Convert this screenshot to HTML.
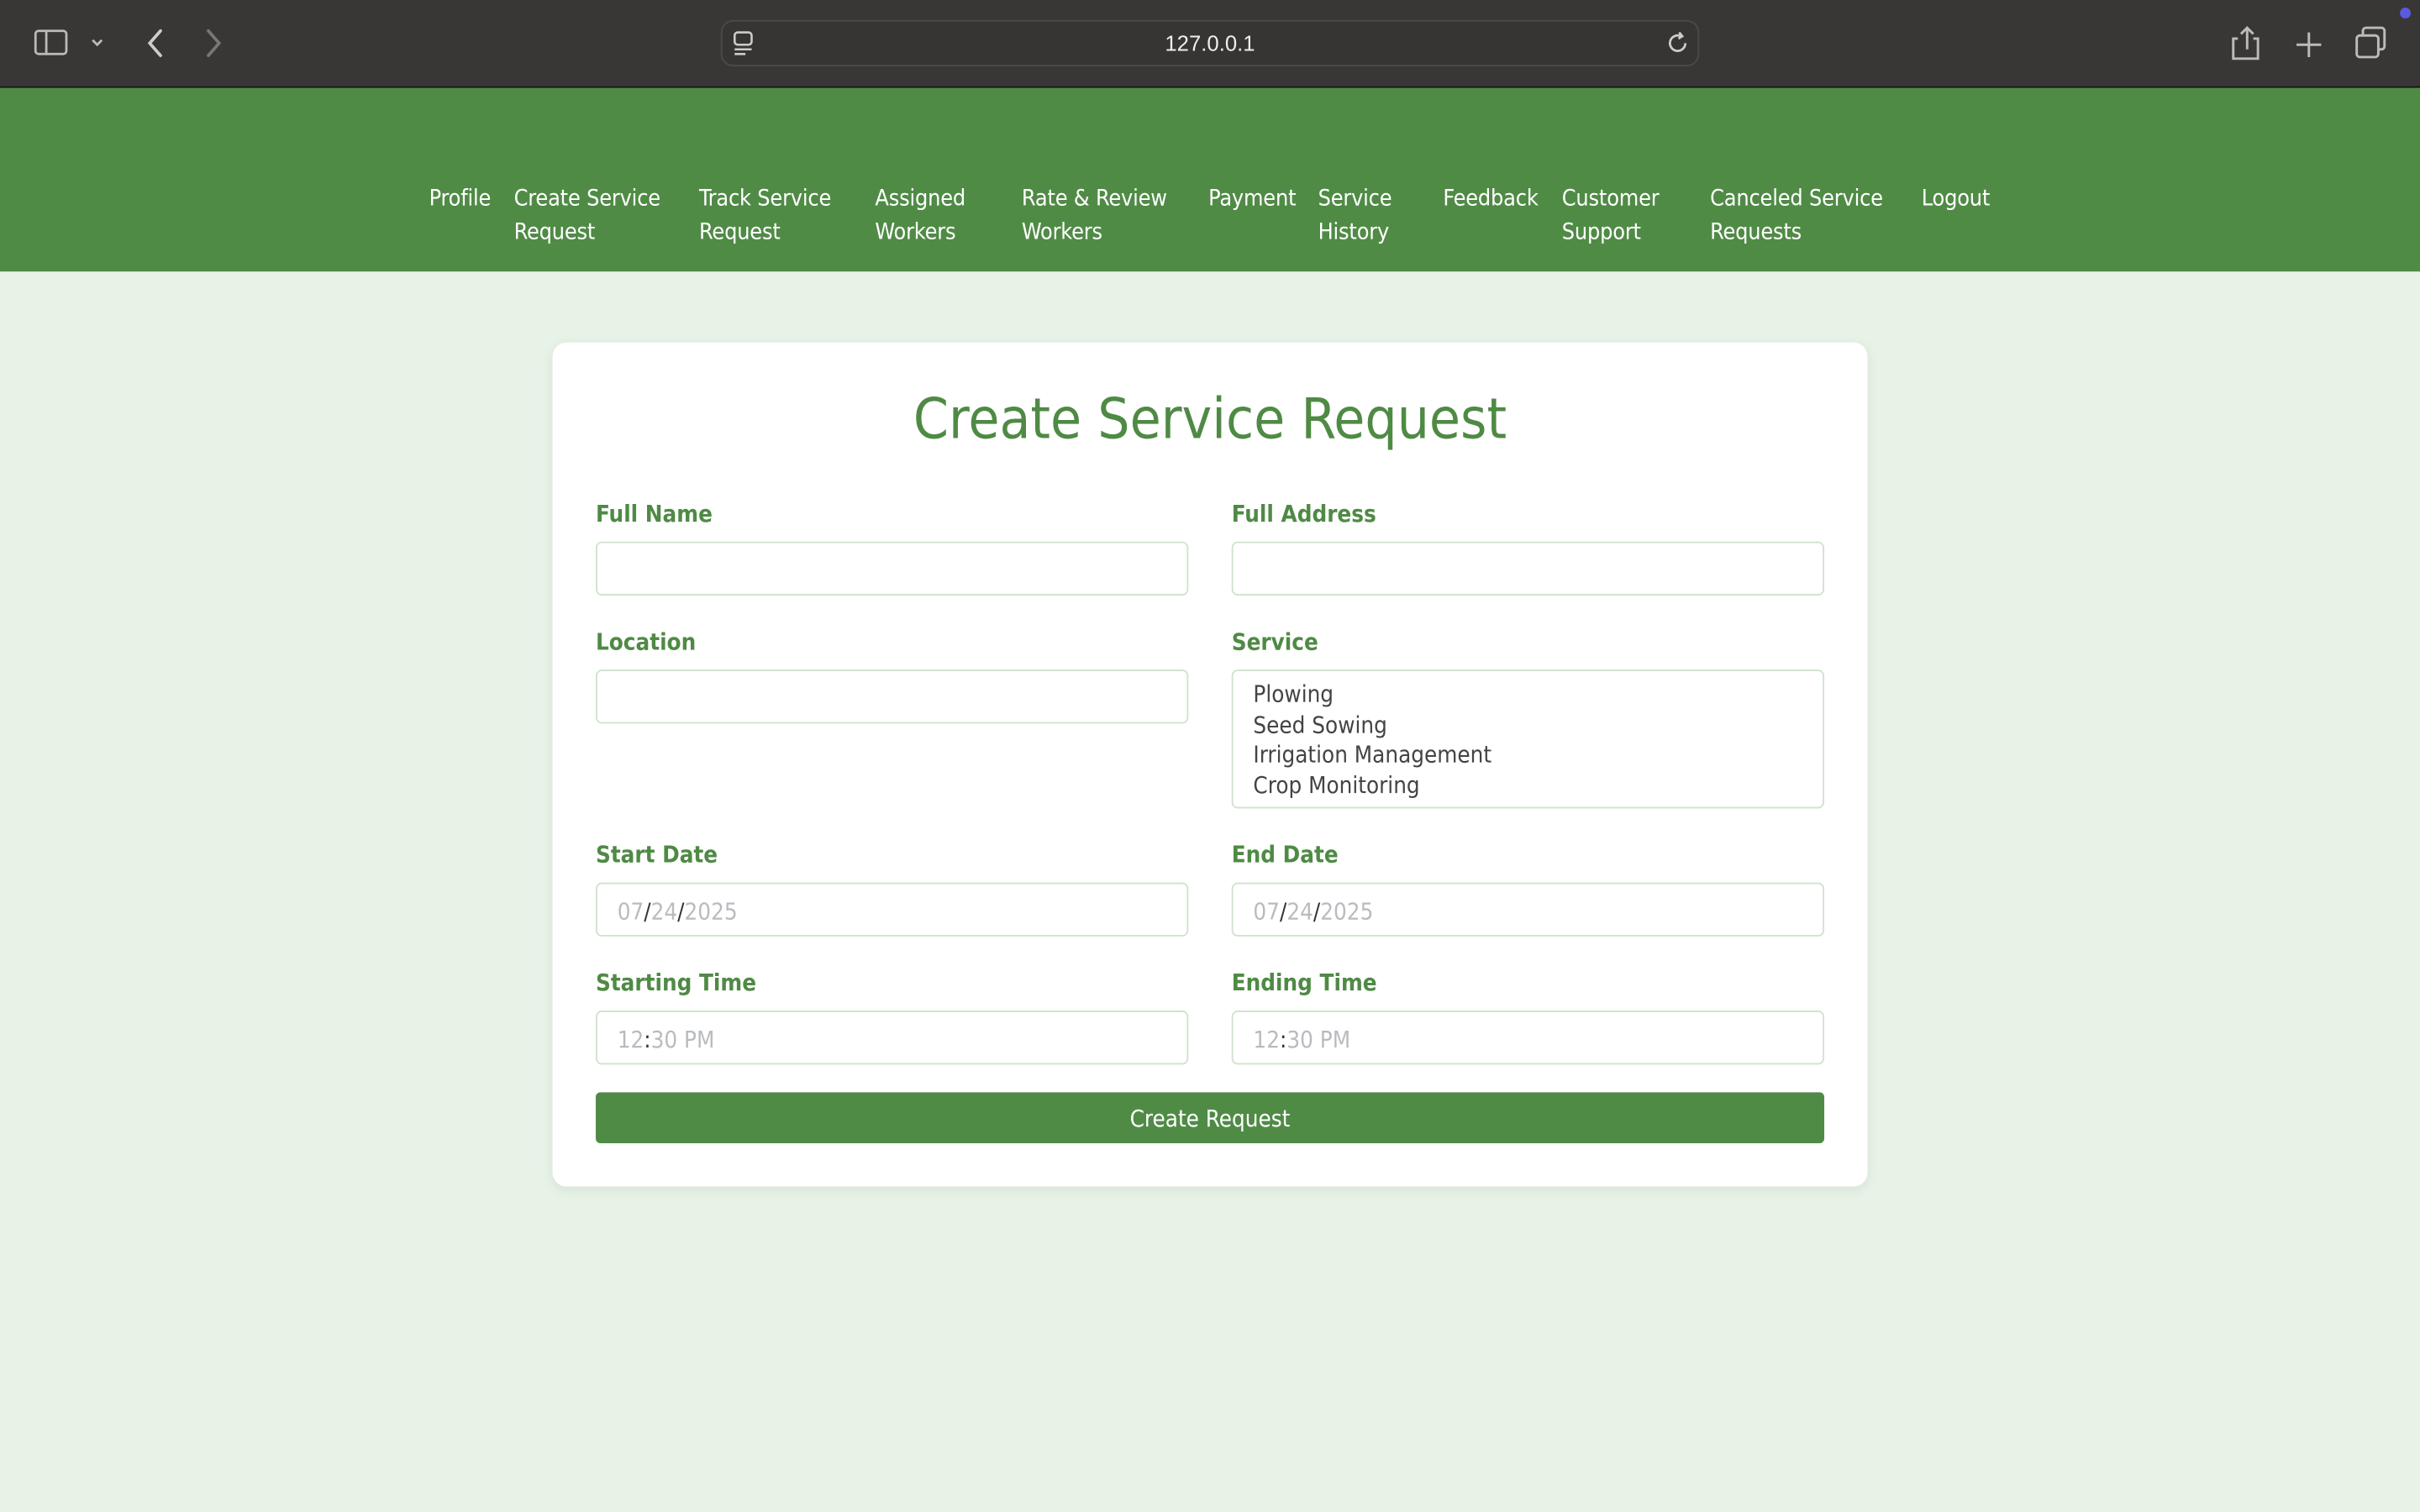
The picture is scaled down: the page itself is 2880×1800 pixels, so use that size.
<!DOCTYPE html>
<html><head><meta charset="utf-8"><style>
*{margin:0;padding:0;box-sizing:border-box}
html,body{width:2880px;height:1800px;overflow:hidden;background:#e8f3e8}
#w{position:absolute;left:0;top:0;width:1568px;height:980px;transform:scale(1.836735);transform-origin:0 0;font-family:"DejaVu Sans Condensed","DejaVu Sans","Liberation Sans",sans-serif}
.a{position:absolute}
#tb{left:0;top:0;width:1568px;height:57px;background:#383736;border-bottom:1px solid #111}
#url{left:467px;top:13px;width:634px;height:30px;border:1px solid #4a4a4a;border-radius:8px;background:#363534;color:#eee;font-size:14px;text-align:center;line-height:29px;font-family:"Liberation Sans",sans-serif}
#nav{left:0;top:57px;width:1568px;height:119px;background:#508b46}
.n{position:absolute;top:118px;color:#fff;font-size:14.6px;letter-spacing:-0.1px;line-height:22px;white-space:nowrap}
#card{left:358px;top:222px;width:852px;height:547px;background:#fff;border-radius:9px;box-shadow:0 2px 8px rgba(0,0,0,.08)}
h1{position:absolute;left:0;width:1568px;top:248px;text-align:center;font-size:36.5px;font-weight:normal;color:#4f8a45;line-height:48px}
.l{position:absolute;color:#4f8a45;font-weight:bold;font-size:15px;line-height:20px;margin-top:1px}
.i{position:absolute;width:384px;height:35px;border:1px solid #cfe3cc;border-radius:4px;background:#fff;color:#b8bcc0;font-size:15px;line-height:36px;padding-left:13px}
.i b{font-weight:normal;color:#333}
.o{color:#444;font-size:15px;line-height:19.6px}
#btn{left:386px;top:708px;width:796px;height:33px;background:#508b46;border-radius:3px;color:#fff;font-size:15px;text-align:center;line-height:34px}
</style></head><body><div id="w">
<div id="tb" class="a"></div>
<svg class="a" style="left:20px;top:17px" width="50" height="22" viewBox="0 0 50 22" fill="none" stroke="#bbb" stroke-width="1.5"><rect x="3" y="3" width="20" height="15" rx="2"/><line x1="10" y1="3" x2="10" y2="18"/><path d="M40 9l3 3 3-3"/></svg>
<svg class="a" style="left:90px;top:17px" width="60" height="22" viewBox="0 0 60 22" fill="none" stroke-width="2" stroke-linecap="round"><path d="M14 3l-7 8 7 8" stroke="#ccc"/><path d="M45 3l7 8-7 8" stroke="#777"/></svg>
<div id="url" class="a">127.0.0.1</div>
<svg class="a" style="left:474px;top:20px" width="16" height="18" viewBox="0 0 16 18" fill="none" stroke="#ccc" stroke-width="1.4"><rect x="2" y="1" width="11" height="8" rx="2"/><line x1="2" y1="12" x2="13" y2="12"/><line x1="2" y1="15" x2="9" y2="15"/></svg>
<svg class="a" style="left:1078px;top:19px" width="18" height="18" viewBox="0 0 18 18" fill="none" stroke="#ccc" stroke-width="1.5"><path d="M14 9a5 5 0 1 1-3-4.6"/><path d="M10 2l2 2.5-2.5 1.5"/></svg>
<svg class="a" style="left:1440px;top:14px" width="120" height="28" viewBox="0 0 120 28" fill="none" stroke="#bbb" stroke-width="1.6"><path d="M10 11h-3v13h16v-13h-3M16 4v14M12 8l4-4 4 4"/><path d="M56 7v16M48 15h16"/><rect x="87" y="9" width="14" height="14" rx="2"/><path d="M91 9V6a2 2 0 0 1 2-2h10a2 2 0 0 1 2 2v10a2 2 0 0 1-2 2h-2"/></svg>
<div class="a" style="left:1555px;top:5px;width:7px;height:7px;border-radius:50%;background:#5a5ae0"></div>
<div id="nav" class="a"></div>
<div class="n" style="left:278px">Profile</div>
<div class="n" style="left:333px">Create Service<br>Request</div>
<div class="n" style="left:453px">Track Service<br>Request</div>
<div class="n" style="left:567px">Assigned<br>Workers</div>
<div class="n" style="left:662px">Rate &amp; Review<br>Workers</div>
<div class="n" style="left:783px">Payment</div>
<div class="n" style="left:854px">Service<br>History</div>
<div class="n" style="left:935px">Feedback</div>
<div class="n" style="left:1012px">Customer<br>Support</div>
<div class="n" style="left:1108px">Canceled Service<br>Requests</div>
<div class="n" style="left:1245px">Logout</div>
<div id="card" class="a"></div>
<h1>Create Service Request</h1>
<div class="l" style="left:386px;top:322px">Full Name</div>
<div class="l" style="left:798px;top:322px">Full Address</div>
<div class="i" style="left:386px;top:351px"></div>
<div class="i" style="left:798px;top:351px"></div>
<div class="l" style="left:386px;top:405px">Location</div>
<div class="l" style="left:798px;top:405px">Service</div>
<div class="i" style="left:386px;top:434px"></div>
<div class="i" style="left:798px;top:434px;height:90px;padding-top:6px;line-height:19.6px">
<div class="o">Plowing</div><div class="o">Seed Sowing</div><div class="o">Irrigation Management</div><div class="o">Crop Monitoring</div></div>
<div class="l" style="left:386px;top:543px">Start Date</div>
<div class="l" style="left:798px;top:543px">End Date</div>
<div class="i" style="left:386px;top:572px">07<b>/</b>24<b>/</b>2025</div>
<div class="i" style="left:798px;top:572px">07<b>/</b>24<b>/</b>2025</div>
<div class="l" style="left:386px;top:626px">Starting Time</div>
<div class="l" style="left:798px;top:626px">Ending Time</div>
<div class="i" style="left:386px;top:655px">12<b>:</b>30 PM</div>
<div class="i" style="left:798px;top:655px">12<b>:</b>30 PM</div>
<div id="btn" class="a">Create Request</div>
</div></body></html>
